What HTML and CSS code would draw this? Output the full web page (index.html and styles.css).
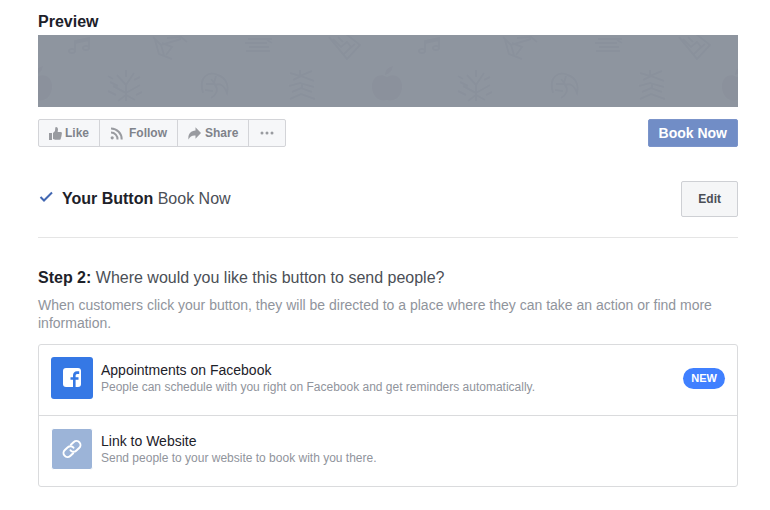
FILE: index.html
```html
<!DOCTYPE html>
<html lang="en">
<head>
<meta charset="utf-8">
<title>Add a Button</title>
<link rel="stylesheet" href="styles.css">
</head>
<body>
<main class="page">
  <section class="preview">
    <h2 class="heading preview-title">Preview</h2>
    <svg class="cover" aria-hidden="true">
      <defs>
        <pattern id="doodles" width="350" height="72" patternUnits="userSpaceOnUse">
          <g class="doodle">
            <path d="M37 15V6l14-3v9M37 8l14-3"/><ellipse cx="34" cy="16" rx="3" ry="2"/><ellipse cx="48" cy="13" rx="3" ry="2"/>
            <path d="M115 2l8 8 20-6M117 5l4 14 13 5M123 10l3 10M129 3l14-1 6 5M124 8l10 4-6 8"/>
            <path d="M210 4h24M207 8h22M211 12h20M208 16h24M229 5l5 3"/>
            <path d="M291 2l18 22 13-14L308-1M295 4l8 8 6-5 4 5-8 8M300 2l5 5M310 15l7-6"/>
            <path d="M88 66V50M88 58l-13-7M88 58l14-8M88 50l-9-10M88 50l8-12M78 60l-8-4M98 60l6-3M72 47l8 4M88 42v-7M80 66l8-6 9 5M70 41l5 3M96 45l6-3"/>
            <path d="M165 58c-5-17 6-22 15-18 8 3 11 10 9 18-3-8-7-10-12-8 4 5 1 10-4 13M168 49h8M173 44l4 5M167 55l8 1M178 41l-2 7"/>
            <path d="M252 38l10 3 12-5M255 45l8-4 13 5M251 51l11-3 14 4M254 57l9-4 11 4M252 64l11-5 14 5M262 35v6M264 48v5"/>
          </g>
          <g class="doodle doodle-fill">
            <path d="M349 42c-8-5-16 1-15 11 1 9 7 14 15 12 8 2 14-3 15-12 1-10-7-16-15-11zM347 40q0-7 8-9-1 7-8 9z"/>
            <path d="M-1 42c-8-5-16 1-15 11 1 9 7 14 15 12 8 2 14-3 15-12 1-10-7-16-15-11zM-3 40q0-7 8-9-1 7-8 9z"/>
          </g>
        </pattern>
      </defs>
      <rect width="100%" height="100%" fill="url(#doodles)"/>
    </svg>
    <div class="actions">
      <div class="social">
        <button type="button" class="social-btn">
          <svg width="13" height="13" viewBox="0 0 13 13" aria-hidden="true"><path fill="currentColor" d="M0 6h3v7H0zM4 6l2-2 .3-3.2Q6.400 0 7.300.1 9 .4 9 2.300L8.700 5H12q1 .2 1 1.200l-.4.9.2 1-.5.9.1 1-.6.8v1q-.2.900-1.100 1H6.200L4 12z"/></svg>Like</button>
        <button type="button" class="social-btn social-btn-wide">
          <svg width="13" height="13" viewBox="0 0 13 13" aria-hidden="true"><circle cx="2.200" cy="10.800" r="1.600" fill="currentColor"/><path fill="none" stroke="currentColor" stroke-width="2" d="M1 5.500A6.500 6.500 0 0 1 7.500 12.500M1 1.500A10.700 10.700 0 0 1 11.700 12.500"/></svg>Follow</button>
        <button type="button" class="social-btn">
          <svg width="13" height="13" viewBox="0 0 13 13" aria-hidden="true"><path fill="currentColor" d="M7.500.3L13 6l-5.500 5.700V8.500C4 8.200 2 9.500.5 12.600-.3 7.500 2.500 3.800 7.500 3.500z"/></svg>Share</button>
        <button type="button" class="social-btn" aria-label="More">
          <svg width="16" height="4" viewBox="0 0 16 4" aria-hidden="true"><g fill="currentColor"><circle cx="3" cy="2" r="1.500"/><circle cx="8" cy="2" r="1.500"/><circle cx="13" cy="2" r="1.500"/></g></svg></button>
      </div>
      <button type="button" class="book-btn">Book Now</button>
    </div>
  </section>

  <section class="chosen">
    <svg class="check" width="14" height="12" viewBox="0 0 14 12" aria-hidden="true"><path fill="none" stroke="currentColor" stroke-width="2" d="M1.500 6l3.500 3.500L13 1.500"/></svg>
    <h2 class="heading">Your Button <span class="light">Book Now</span></h2>
    <button type="button" class="edit-btn">Edit</button>
  </section>

  <section class="step">
    <h2 class="heading">Step 2: <span class="light">Where would you like this button to send people?</span></h2>
    <p class="hint">When customers click your button, they will be directed to a place where they can take an action or find more information.</p>
    <div class="options">
      <button type="button" class="option">
        <span class="tile tile-facebook">
          <svg width="18" height="20" viewBox="0 0 18 20" aria-hidden="true"><rect width="18" height="19" rx="3" fill="#fff"/><path fill="none" stroke="#3578e5" stroke-width="2.600" d="M11.300 19.500V7.500Q11.300 4.600 14 4.600h2.200M7.500 10.500h8"/></svg>
        </span>
        <span class="option-text">
          <span class="option-title">Appointments on Facebook</span>
          <span class="option-desc">People can schedule with you right on Facebook and get reminders automatically.</span>
        </span>
        <span class="badge">NEW</span>
      </button>
      <button type="button" class="option">
        <span class="tile tile-link">
          <svg width="20" height="20" viewBox="-10 -10 20 20" aria-hidden="true"><g fill="none" stroke="#fff" stroke-width="2" stroke-linecap="round" transform="rotate(-42)"><path d="M-2 4H-6a4 4 0 0 1 0-8h4a4 4 0 0 1 4 4"/><path d="M2-4H6a4 4 0 0 1 0 8H2a4 4 0 0 1-4-4"/></g></svg>
        </span>
        <span class="option-text">
          <span class="option-title">Link to Website</span>
          <span class="option-desc">Send people to your website to book with you there.</span>
        </span>
      </button>
    </div>
  </section>
</main>
</body>
</html>
```
FILE: styles.css
```css
* { box-sizing: border-box; }

body {
  margin: 0;
  background: #fff;
  color: #1d2129;
  font-family: "Liberation Sans", Arial, sans-serif;
}

button {
  margin: 0;
  font-family: inherit;
  cursor: pointer;
}

svg { flex: none; }

.page { padding: 12px 32px 16px 38px; }

.heading {
  margin: 0;
  font-size: 16px;
  line-height: 20px;
  font-weight: 700;
}

.light {
  font-weight: 400;
  color: #4b4f56;
}

.preview-title { margin-bottom: 3px; }

.cover {
  display: block;
  width: 100%;
  height: 72px;
  background: #8e959f;
}

.doodle {
  fill: none;
  stroke: #8a919c;
  stroke-width: 2;
}

.doodle-fill {
  fill: #8b919c;
  stroke: none;
}

.actions {
  display: flex;
  justify-content: space-between;
  margin-top: 12px;
}

.social {
  display: flex;
  border: 1px solid #d3d4d8;
  border-radius: 2px;
  background: #f6f7f9;
}

.social-btn {
  display: flex;
  align-items: center;
  gap: 3px;
  height: 26px;
  padding: 0 10px;
  border: 0;
  background: none;
  color: #7f838b;
  font-size: 12px;
  font-weight: 700;
}

.social-btn svg { color: #999ba0; }

.social-btn + .social-btn {
  gap: 4px;
  border-left: 1px solid #d3d4d8;
}

.social-btn + .social-btn-wide { gap: 6px; }

.book-btn {
  height: 28px;
  padding: 0 10px;
  border: 1px solid #7b94ca;
  border-radius: 2px;
  background: #718dc6;
  color: #fff;
  font-size: 14px;
  font-weight: 700;
}

.chosen {
  display: flex;
  align-items: center;
  margin-top: 34px;
  padding-bottom: 20px;
  border-bottom: 1px solid #e5e5e5;
}

.check {
  margin: 0 9px 4px 1px;
  color: #4267b2;
}

.edit-btn {
  height: 36px;
  margin-left: auto;
  padding: 0 16px;
  border: 1px solid #ced0d4;
  border-radius: 2px;
  background: #f5f6f7;
  color: #4b4f56;
  font-size: 12px;
  font-weight: 700;
}

.step { padding-top: 30px; }

.hint {
  margin: 8px 0 12px;
  color: #90949c;
  font-size: 14px;
  line-height: 18px;
}

.options {
  border: 1px solid #dadbdd;
  border-radius: 3px;
}

.option {
  display: flex;
  align-items: center;
  width: 100%;
  padding: 12px 12px 16px;
  border: 0;
  background: none;
  text-align: left;
}

.option + .option { border-top: 1px solid #dadbdd; }

.tile {
  display: flex;
  flex: none;
  align-items: center;
  justify-content: center;
  width: 42px;
  height: 42px;
  margin-right: 8px;
  border-radius: 3px;
}

.tile-facebook { background: #3578e5; }

.tile-link {
  border: 1px solid #fff;
  background: #9cb4d8;
}

.option-text {
  display: flex;
  flex: 1;
  flex-direction: column;
}

.option-title {
  color: #1d2129;
  font-size: 14px;
  line-height: 18px;
}

.option-desc {
  color: #90949c;
  font-size: 12px;
  line-height: 16px;
}

.badge {
  padding: 0 8px;
  border-radius: 11px;
  background: #4080ff;
  color: #fff;
  font-size: 11px;
  font-weight: 700;
  line-height: 21px;
}
```
